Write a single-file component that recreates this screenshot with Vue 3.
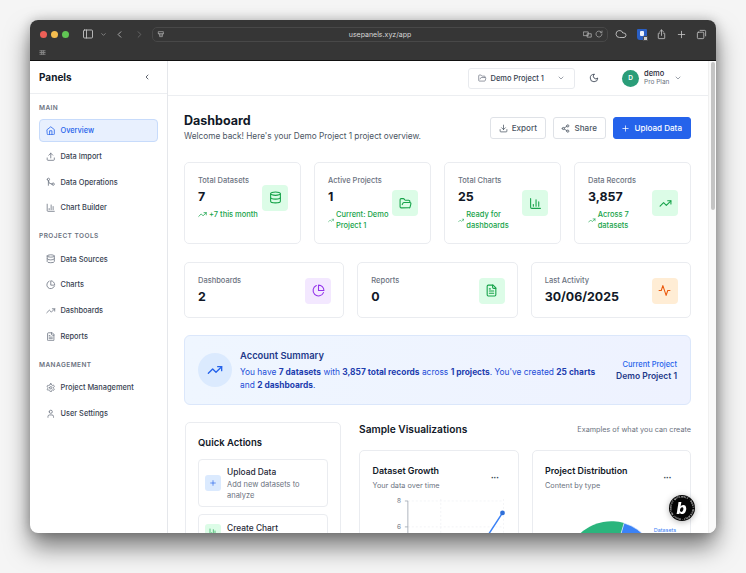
<script setup>
const c = (x, y, r) => `M${x - r} ${y}a${r} ${r} 0 1 0 ${2 * r} 0a${r} ${r} 0 1 0 ${-2 * r} 0`
const icons = {
  home: ['m3 9 9-7 9 7v11a2 2 0 0 1-2 2H5a2 2 0 0 1-2-2z', 'M9 22V12h6v10'],
  upload: ['M21 15v4a2 2 0 0 1-2 2H5a2 2 0 0 1-2-2v-4', 'M17 8l-5-5-5 5', 'M12 3v12'],
  download: ['M21 15v4a2 2 0 0 1-2 2H5a2 2 0 0 1-2-2v-4', 'M7 10l5 5 5-5', 'M12 15V3'],
  merge: [c(18, 18, 3), c(6, 6, 3), 'M6 21V9a9 9 0 0 0 9 9'],
  bars: ['M3 3v16a2 2 0 0 0 2 2h16', 'M18 17V9', 'M13 17V5', 'M8 17v-3'],
  database: ['M3 5a9 3 0 1 0 18 0a9 3 0 1 0-18 0', 'M3 5V19A9 3 0 0 0 21 19V5', 'M3 12A9 3 0 0 0 21 12'],
  pie: ['M21.21 15.89A10 10 0 1 1 8 2.83', 'M22 12A10 10 0 0 0 12 2v10z'],
  trend: ['m22 7-8.5 8.5-5-5L2 17', 'M16 7h6v6'],
  file: ['M15 2H6a2 2 0 0 0-2 2v16a2 2 0 0 0 2 2h12a2 2 0 0 0 2-2V7Z', 'M14 2v4a2 2 0 0 0 2 2h4', 'M10 9H8', 'M16 13H8', 'M16 17H8'],
  settings: ['M12.22 2h-.44a2 2 0 0 0-2 2v.18a2 2 0 0 1-1 1.73l-.43.25a2 2 0 0 1-2 0l-.15-.08a2 2 0 0 0-2.73.73l-.22.38a2 2 0 0 0 .73 2.73l.15.1a2 2 0 0 1 1 1.72v.51a2 2 0 0 1-1 1.74l-.15.09a2 2 0 0 0-.73 2.73l.22.38a2 2 0 0 0 2.73.73l.15-.08a2 2 0 0 1 2 0l.43.25a2 2 0 0 1 1 1.73V20a2 2 0 0 0 2 2h.44a2 2 0 0 0 2-2v-.18a2 2 0 0 1 1-1.73l.43-.25a2 2 0 0 1 2 0l.15.08a2 2 0 0 0 2.73-.73l.22-.39a2 2 0 0 0-.73-2.73l-.15-.08a2 2 0 0 1-1-1.74v-.5a2 2 0 0 1 1-1.74l.15-.09a2 2 0 0 0 .73-2.73l-.22-.38a2 2 0 0 0-2.73-.73l-.15.08a2 2 0 0 1-2 0l-.43-.25a2 2 0 0 1-1-1.73V4a2 2 0 0 0-2-2z', c(12, 12, 3)],
  user: ['M19 21v-2a4 4 0 0 0-4-4H9a4 4 0 0 0-4 4v2', c(12, 7, 4)],
  folder: ['m6 14 1.5-2.9A2 2 0 0 1 9.24 10H20a2 2 0 0 1 1.94 2.5l-1.54 6a2 2 0 0 1-1.95 1.5H4a2 2 0 0 1-2-2V5a2 2 0 0 1 2-2h3.9a2 2 0 0 1 1.69.9l.81 1.2a2 2 0 0 0 1.67.9H18a2 2 0 0 1 2 2v2'],
  moon: ['M12 3a6 6 0 0 0 9 9 9 9 0 1 1-9-9Z'],
  share: [c(18, 5, 3), c(6, 12, 3), c(18, 19, 3), 'M8.59 13.51l6.83 3.98', 'M15.41 6.51l-6.82 3.98'],
  plus: ['M5 12h14', 'M12 5v14'],
  activity: ['M22 12h-4l-3 9L9 3l-3 9H2'],
  left: ['m15 18-6-6 6-6'],
  right: ['m9 18 6-6-6-6'],
  down: ['m6 9 6 6 6-6'],
  panel: ['M5 4h14a2 2 0 0 1 2 2v12a2 2 0 0 1-2 2H5a2 2 0 0 1-2-2V6a2 2 0 0 1 2-2z', 'M9 4v16'],
  cloud: ['M17.5 19H9a7 7 0 1 1 6.71-9h1.79a4.5 4.5 0 1 1 0 9Z'],
  reload: ['M21 12a9 9 0 1 1-3-6.7', 'M21 3v5h-5'],
  tabs: ['M9 3h10a2 2 0 0 1 2 2v10', 'M5 7h10a2 2 0 0 1 2 2v10a2 2 0 0 1-2 2H5a2 2 0 0 1-2-2V9a2 2 0 0 1 2-2z'],
  sharebox: ['M8 9H6a1 1 0 0 0-1 1v10a1 1 0 0 0 1 1h12a1 1 0 0 0 1-1V10a1 1 0 0 0-1-1h-2', 'M12 14V2', 'M8 6l4-4 4 4'],
  db2: ['M5 5h14v6H5z', 'M5 11c0 3 3 4 7 4s7-1 7-4', 'M8 15v5h8v-5'],
  translate: ['M2 5h12v10H2z', 'M12 10h10v9H12z'],
  grid: ['M3 6h18', 'M3 12h18', 'M3 18h18', 'M9 6v12', 'M15 6v12']
}
const nav = [
  { title: 'Main', items: [['home', 'Overview', true], ['upload', 'Data Import'], ['merge', 'Data Operations'], ['bars', 'Chart Builder']] },
  { title: 'Project Tools', items: [['database', 'Data Sources'], ['pie', 'Charts'], ['trend', 'Dashboards'], ['file', 'Reports']] },
  { title: 'Management', items: [['settings', 'Project Management'], ['user', 'User Settings']] }
]
const topStats = [
  { label: 'Total Datasets', value: '7', trend: '+7 this month', icon: 'database' },
  { label: 'Active Projects', value: '1', trend: 'Current: Demo Project 1', icon: 'folder' },
  { label: 'Total Charts', value: '25', trend: 'Ready for dashboards', icon: 'bars' },
  { label: 'Data Records', value: '3,857', trend: 'Across 7 datasets', icon: 'trend' }
]
const lowStats = [
  { label: 'Dashboards', value: '2', icon: 'pie', tone: 'purple' },
  { label: 'Reports', value: '0', icon: 'file', tone: 'green' },
  { label: 'Last Activity', value: '30/06/2025', icon: 'activity', tone: 'orange' }
]
</script>

<template>
  <div class="page">
  <div class="window">
    <header class="chrome">
      <div class="toolbar">
        <span class="light red"></span><span class="light yellow"></span><span class="light green-l"></span>
        <svg class="ci side" viewBox="0 0 24 24"><path v-for="d in icons.panel" :key="d" :d="d" /></svg>
        <svg class="ci tiny" viewBox="0 0 24 24"><path v-for="d in icons.down" :key="d" :d="d" /></svg>
        <svg class="ci back" viewBox="0 0 24 24"><path v-for="d in icons.left" :key="d" :d="d" /></svg>
        <svg class="ci fwd" viewBox="0 0 24 24"><path v-for="d in icons.right" :key="d" :d="d" /></svg>
        <div class="url">
          <svg class="ci urlicon" viewBox="0 0 24 24"><path v-for="d in icons.db2" :key="d" :d="d" /></svg>
          <span class="urltext">usepanels.xyz/app</span>
          <svg class="ci trans" viewBox="0 0 24 24"><path v-for="d in icons.translate" :key="d" :d="d" /></svg>
          <svg class="ci rel" viewBox="0 0 24 24"><path v-for="d in icons.reload" :key="d" :d="d" /></svg>
        </div>
        <svg class="ci cloud" viewBox="0 0 24 24"><path v-for="d in icons.cloud" :key="d" :d="d" /></svg>
        <span class="shield"><span class="shield-mark"></span><span class="shield-dot"></span></span>
        <svg class="ci tool" viewBox="0 0 24 24"><path v-for="d in icons.sharebox" :key="d" :d="d" /></svg>
        <svg class="ci tool" viewBox="0 0 24 24"><path v-for="d in icons.plus" :key="d" :d="d" /></svg>
        <svg class="ci tool" viewBox="0 0 24 24"><path v-for="d in icons.tabs" :key="d" :d="d" /></svg>
      </div>
      <div class="favbar">
        <svg class="ci fav" viewBox="0 0 24 24"><path v-for="d in icons.grid" :key="d" :d="d" /></svg>
      </div>
    </header>

    <div class="app">
      <aside class="sidebar">
        <div class="brand">
          <span>Panels</span>
          <svg class="i brand-chev" viewBox="0 0 24 24"><path v-for="d in icons.left" :key="d" :d="d" /></svg>
        </div>
        <nav class="nav">
          <section v-for="g in nav" :key="g.title" class="group">
            <h4>{{ g.title }}</h4>
            <a v-for="it in g.items" :key="it[1]" class="item" :class="{ active: it[2] }">
              <svg class="i item-icon" viewBox="0 0 24 24"><path v-for="d in icons[it[0]]" :key="d" :d="d" /></svg>
              {{ it[1] }}
            </a>
          </section>
        </nav>
      </aside>

      <div class="main">
        <div class="topbar">
          <div class="select">
            <svg class="i sel-icon" viewBox="0 0 24 24"><path v-for="d in icons.folder" :key="d" :d="d" /></svg>
            <span>Demo Project 1</span>
            <svg class="i sel-chev" viewBox="0 0 24 24"><path v-for="d in icons.down" :key="d" :d="d" /></svg>
          </div>
          <svg class="i moon" viewBox="0 0 24 24"><path v-for="d in icons.moon" :key="d" :d="d" /></svg>
          <div class="avatar">D</div>
          <div class="who"><b>demo</b><span>Pro Plan</span></div>
          <svg class="i who-chev" viewBox="0 0 24 24"><path v-for="d in icons.down" :key="d" :d="d" /></svg>
        </div>

        <div class="content">
          <div class="head">
            <div>
              <h1>Dashboard</h1>
              <p>Welcome back! Here's your Demo Project 1 project overview.</p>
            </div>
            <div class="actions">
              <button class="btn">
                <svg class="i btn-i" viewBox="0 0 24 24"><path v-for="d in icons.download" :key="d" :d="d" /></svg>Export
              </button>
              <button class="btn">
                <svg class="i btn-i" viewBox="0 0 24 24"><path v-for="d in icons.share" :key="d" :d="d" /></svg>Share
              </button>
              <button class="btn primary">
                <svg class="i btn-i" viewBox="0 0 24 24"><path v-for="d in icons.plus" :key="d" :d="d" /></svg>Upload Data
              </button>
            </div>
          </div>

          <div class="stats four">
            <div v-for="s in topStats" :key="s.label" class="card stat">
              <div class="stat-row">
                <div class="stat-text">
                  <div class="label">{{ s.label }}</div>
                  <div class="value">{{ s.value }}</div>
                  <div class="trend">
                    <svg class="i trend-i" viewBox="0 0 24 24"><path v-for="d in icons.trend" :key="d" :d="d" /></svg>
                    <span>{{ s.trend }}</span>
                  </div>
                </div>
                <div class="tile green">
                  <svg class="i tile-i" viewBox="0 0 24 24"><path v-for="d in icons[s.icon]" :key="d" :d="d" /></svg>
                </div>
              </div>
            </div>
          </div>

          <div class="stats three">
            <div v-for="s in lowStats" :key="s.label" class="card stat low">
              <div class="stat-row">
                <div class="stat-text">
                  <div class="label">{{ s.label }}</div>
                  <div class="value">{{ s.value }}</div>
                </div>
                <div class="tile" :class="s.tone">
                  <svg class="i tile-i" viewBox="0 0 24 24"><path v-for="d in icons[s.icon]" :key="d" :d="d" /></svg>
                </div>
              </div>
            </div>
          </div>

          <div class="banner">
            <div class="circle">
              <svg class="i circle-i" viewBox="0 0 24 24"><path v-for="d in icons.trend" :key="d" :d="d" /></svg>
            </div>
            <div class="banner-text">
              <h3>Account Summary</h3>
              <p>You have <b>7 datasets</b> with <b>3,857 total records</b> across <b>1 projects</b>. You've created <b>25 charts</b> and <b>2 dashboards</b>.</p>
            </div>
            <div class="banner-side">
              <span>Current Project</span>
              <b>Demo Project 1</b>
            </div>
          </div>

          <div class="lower">
            <div class="card quick">
              <h3>Quick Actions</h3>
              <div class="action">
                <div class="small-tile blue">
                  <svg class="i small-i" viewBox="0 0 24 24"><path v-for="d in icons.plus" :key="d" :d="d" /></svg>
                </div>
                <div class="action-text">
                  <div class="action-title">Upload Data</div>
                  <div class="action-sub">Add new datasets to analyze</div>
                </div>
              </div>
              <div class="action cut">
                <div class="small-tile green">
                  <svg class="i small-i" viewBox="0 0 24 24"><path v-for="d in icons.bars" :key="d" :d="d" /></svg>
                </div>
                <div class="action-text">
                  <div class="action-title">Create Chart</div>
                </div>
              </div>
            </div>

            <div class="viz">
              <div class="viz-head">
                <h2>Sample Visualizations</h2>
                <span>Examples of what you can create</span>
              </div>
              <div class="viz-grid">
                <div class="card chart">
                  <div class="chart-head">
                    <div>
                      <h3>Dataset Growth</h3>
                      <p>Your data over time</p>
                    </div>
                    <span class="dots">···</span>
                  </div>
                  <svg class="plot" viewBox="0 0 133 100">
                    <g class="gridlines">
                      <path d="M35 5H131M35 31H131M35 57H131M68 3V100M131 3V100" />
                    </g>
                    <path class="axis" d="M32 5H35V100M32 31H35" />
                    <text x="28" y="7">8</text>
                    <text x="28" y="33">6</text>
                    <path class="line" d="M68 90L115 40L130 17" />
                    <circle class="dot" cx="130" cy="17" r="2.4" />
                  </svg>
                </div>
                <div class="card chart">
                  <div class="chart-head">
                    <div>
                      <h3>Project Distribution</h3>
                      <p>Content by type</p>
                    </div>
                    <span class="dots">···</span>
                  </div>
                  <svg class="plot" viewBox="0 0 134 100">
                    <path class="pie-green" d="M67 71.5L80 27.4A46 46 0 0 0 21 71.5Z" />
                    <path class="pie-blue" d="M67 71.5L80 27.4A46 46 0 0 1 113 71.5Z" />
                    <text class="pie-label" x="110" y="36">Datasets</text>
                  </svg>
                </div>
              </div>
            </div>
          </div>
        </div>
      </div>

      <div class="scroll"><span class="thumb"></span></div>

      <svg class="badge" viewBox="0 0 52 52">
        <defs><path id="ring" d="M26 26m-21 0a21 21 0 1 1 42 0a21 21 0 1 1-42 0" /></defs>
        <circle cx="26" cy="26" r="26" fill="#050505" />
        <text class="ring"><textPath href="#ring">BUILT WITH BOLT · BUILT WITH BOLT · BUILT WITH</textPath></text>
        <text class="b" x="25" y="38" text-anchor="middle">b</text>
      </svg>
    </div>
  </div>
  </div>
</template>

<style>
html, body { margin: 0; background: #f5f5f5; }
</style>

<style scoped>
* { box-sizing: border-box; }
h1, h2, h3, h4, p { margin: 0; }
.page { width: 746px; height: 573px; padding: 20px 0 0 30px; background: #f5f5f5; overflow: hidden; }
.window {
  position: relative;
  width: 686px;
  height: 513px;
  border-radius: 8px;
  overflow: hidden;
  font-family: Inter, "Liberation Sans", sans-serif;
  color: #111827;
  background: #fff;
  box-shadow: 0 14px 24px rgba(0, 0, 0, .5), 0 0 12px rgba(0, 0, 0, .22);
}
.i { fill: none; stroke: currentColor; stroke-width: 2; stroke-linecap: round; stroke-linejoin: round; }
.ci { fill: none; stroke: #c4c4c4; stroke-width: 1.8; stroke-linecap: round; stroke-linejoin: round; flex: none; }

.chrome { height: 41px; background: #363636; border-bottom: 1px solid #111; }
.toolbar { height: 26px; display: flex; align-items: center; padding: 2px 0 0 10px; }
.light { width: 7px; height: 7px; border-radius: 50%; margin-right: 4px; flex: none; }
.red { background: #ed5f57; }
.yellow { background: #f4bd4f; }
.green-l { background: #61c554; }
.side { width: 12px; height: 12px; margin-left: 9px; }
.tiny { width: 7px; height: 7px; margin-left: 6px; }
.back { width: 11px; height: 11px; margin-left: 7px; }
.fwd { width: 11px; height: 11px; margin-left: 9px; stroke: #6e6e6e; }
.url {
  width: 456px;
  height: 15px;
  margin-left: 7px;
  border: 1px solid #484848;
  border-radius: 5px;
  display: flex;
  align-items: center;
  padding: 0 4px;
  flex: none;
}
.urlicon { width: 8px; height: 8px; }
.urltext { flex: 1; text-align: center; font-size: 7px; color: #d8d8d8; padding-left: 12px; }
.trans { width: 9px; height: 9px; }
.rel { width: 8px; height: 8px; margin-left: 3px; }
.cloud { width: 12px; height: 12px; margin-left: 7px; }
.shield { width: 10px; height: 11px; margin-left: 10px; border-radius: 1px 1px 3px 3px; background: #2a5fc4; position: relative; flex: none; }
.shield-mark { position: absolute; left: 3px; top: 2px; width: 4px; height: 5px; border-radius: 1px; background: #eef2fb; }
.shield-dot { position: absolute; right: -1px; bottom: -1px; width: 5px; height: 5px; border-radius: 1px; background: #cfcfcf; border: 1px solid #4a4a4a; }
.tool { width: 11px; height: 11px; margin-left: 9px; }
.favbar { height: 13px; padding: 0 0 0 9px; display: flex; align-items: center; }
.fav { width: 7px; height: 7px; stroke: #8a8a8a; stroke-width: 3; }

.app { position: relative; display: flex; height: 472px; overflow: hidden; }
.sidebar { width: 138px; flex: none; border-right: 1px solid #e5e7eb; }
.brand {
  height: 33px;
  padding: 0 16px 0 9px;
  display: flex;
  align-items: center;
  justify-content: space-between;
  font-size: 10px;
  font-weight: 700;
  border-bottom: 1px solid #eceef1;
}
.brand-chev { width: 8px; height: 8px; }
.nav { padding: 8.5px 9px 0; }
.group { margin-bottom: 11.7px; }
.group h4 {
  font-size: 6.5px;
  line-height: 10px;
  font-weight: 600;
  letter-spacing: .45px;
  text-transform: uppercase;
  color: #6b7280;
  margin-bottom: 6.5px;
}
.item {
  height: 23px;
  margin: 0 0 2.8px;
  padding: 0 6px;
  display: flex;
  align-items: center;
  gap: 5px;
  font-size: 7.4px;
  font-weight: 500;
  color: #374151;
  border: 1px solid transparent;
  border-radius: 4px;
}
.item-icon { width: 9.5px; height: 9.5px; color: #6b7280; flex: none; }
.item.active { background: #e8f0fe; border-color: #c7dbfb; color: #2563eb; }
.item.active .item-icon { color: #2563eb; }

.main { flex: 1; min-width: 0; }
.topbar {
  height: 35px;
  display: flex;
  align-items: center;
  padding-right: 34px;
  justify-content: flex-end;
  border-bottom: 1px solid #eceef1;
}
.select {
  width: 107px;
  height: 21px;
  border: 1px solid #e8eaee;
  border-radius: 3px;
  display: flex;
  align-items: center;
  padding: 0 9px;
  font-size: 7.5px;
  font-weight: 500;
  color: #374151;
}
.sel-icon { width: 8.5px; height: 8.5px; color: #6b7280; margin-right: 4px; }
.sel-chev { width: 8px; height: 8px; margin-left: auto; color: #6b7280; }
.moon { width: 10px; height: 10px; margin: 0 23px 0 14px; color: #374151; }
.avatar {
  width: 17px;
  height: 17px;
  border-radius: 50%;
  background: #2a9d78;
  color: #fff;
  font-size: 6.5px;
  font-weight: 600;
  display: flex;
  align-items: center;
  justify-content: center;
}
.who { margin-left: 5px; display: flex; flex-direction: column; width: 29px; }
.who b { font-size: 7.5px; line-height: 9px; font-weight: 500; color: #1f2937; }
.who span { font-size: 6.5px; line-height: 9px; color: #6b7280; }
.who-chev { width: 8px; height: 8px; color: #6b7280; margin-left: 1px; }

.content { padding: 16px 25px 0 16px; }
.head { display: flex; justify-content: space-between; align-items: flex-start; margin-bottom: 19px; }
h1 { font-size: 12.5px; line-height: 17px; font-weight: 700; }
.head p { font-size: 8.25px; line-height: 13px; color: #4b5563; margin-top: 1px; }
.actions { display: flex; gap: 7px; margin-top: 5px; }
.btn {
  height: 22px;
  padding: 0 8px 0 7.5px;
  display: flex;
  align-items: center;
  gap: 4px;
  font: 500 8.1px Inter, "Liberation Sans", sans-serif;
  color: #4b5563;
  background: #fff;
  border: 1px solid #dfe2e7;
  border-radius: 3px;
}
.btn-i { width: 9px; height: 9px; }
.primary { background: #2563eb; border-color: #2563eb; color: #fff; }

.stats { display: grid; }
.four { grid-template-columns: repeat(4, 1fr); gap: 13px; margin-bottom: 18px; }
.three { grid-template-columns: repeat(3, 1fr); gap: 13px; margin-bottom: 17px; }
.card { background: #fff; border: 1px solid #eaecf0; border-radius: 5px; }
.stat { padding: 12px 12px 10px 13px; height: 82px; }
.stat.low { height: 56px; padding-left: 13px; }
.stat-row { display: flex; align-items: center; gap: 0; }
.stat-text { flex: 1; min-width: 0; }
.label { font-size: 7.5px; line-height: 11px; color: #6b7280; font-weight: 500; }
.value { font-size: 12.4px; line-height: 19px; font-weight: 700; color: #111827; margin-top: 1px; }
.trend { display: flex; align-items: center; gap: 2px; margin-top: 3px; font-size: 7.5px; line-height: 11px; color: #16a34a; font-weight: 500; }
.trend-i { width: 9px; height: 9px; min-width: 0; }
.tile { width: 26px; height: 26px; border-radius: 4px; flex: none; display: flex; align-items: center; justify-content: center; }
.tile-i { width: 13px; height: 13px; }
.green { background: #dcfce7; color: #16a34a; }
.purple { background: #f3e8ff; color: #9333ea; }
.orange { background: #ffedd5; color: #ea580c; }
.blue { background: #dbeafe; color: #2563eb; }

.banner {
  height: 70px;
  margin-bottom: 17px;
  padding: 0 13px;
  display: flex;
  align-items: center;
  border: 1px solid #dbe7fb;
  border-radius: 6px;
  background: linear-gradient(90deg, #eff6ff, #eef2ff);
}
.circle { width: 34px; height: 34px; border-radius: 50%; background: #dbeafe; color: #2563eb; flex: none; display: flex; align-items: center; justify-content: center; }
.circle-i { width: 16px; height: 16px; }
.banner-text { margin-left: 8px; flex: 1; min-width: 0; padding-top: 1px; }
.banner-text h3 { font-size: 9.4px; line-height: 13px; font-weight: 600; color: #1e3a8a; margin-bottom: 4.5px; }
.banner-text p { font-size: 8.4px; line-height: 13px; color: #1d4ed8; width: 360px; }
.banner-text b { font-weight: 700; color: #1e40af; }
.banner-side { display: flex; flex-direction: column; align-items: flex-end; flex: none; padding-top: 1px; }
.banner-side span { font-size: 7.5px; line-height: 11px; color: #2563eb; font-weight: 500; }
.banner-side b { font-size: 8.5px; line-height: 13px; font-weight: 600; color: #1e3a8a; }

.lower { display: grid; grid-template-columns: 157px 1fr; gap: 18px; }
.quick { padding: 13px 12px; margin-left: 1px; height: 160px; }
.quick h3 { font-size: 9.5px; line-height: 14px; font-weight: 600; margin-bottom: 9px; }
.action { display: flex; align-items: center; gap: 6px; padding: 6px; border: 1px solid #eaecf0; border-radius: 4px; margin-bottom: 7px; height: 48px; }
.action.cut { align-items: flex-start; }
.action.cut .small-tile { margin-top: 3px; }
.action-text { padding-top: 1px; }
.small-tile { width: 16px; height: 16px; border-radius: 3px; flex: none; display: flex; align-items: center; justify-content: center; }
.small-i { width: 8px; height: 8px; }
.action-title { font-size: 8.4px; line-height: 12px; font-weight: 500; color: #1f2937; margin-bottom: 1px; }
.action-sub { font-size: 7.5px; line-height: 11px; color: #6b7280; }

.viz-head { display: flex; align-items: center; justify-content: space-between; height: 14px; margin-bottom: 14px; }
.viz-head h2 { font-size: 10.2px; font-weight: 600; color: #111827; }
.viz-head span { font-size: 7.25px; color: #6b7280; }
.viz-grid { display: grid; grid-template-columns: 1fr 1fr; gap: 13px; }
.chart { padding: 13px 12.5px 0; height: 200px; }
.chart-head { display: flex; justify-content: space-between; align-items: center; }
.chart h3 { font-size: 8.9px; line-height: 14px; font-weight: 600; }
.chart p { font-size: 7.3px; line-height: 11px; color: #6b7280; margin-top: 2px; }
.dots { font: 700 9px "Liberation Sans", sans-serif; color: #374151; margin-right: 6px; letter-spacing: -.3px; }
.plot { display: block; width: 100%; margin-top: 5px; overflow: visible; }
.plot text { font-size: 6.5px; fill: #6b7280; text-anchor: end; font-family: Inter, sans-serif; }
.gridlines path { fill: none; stroke: #eceef1; stroke-width: .6; stroke-dasharray: 2 2; }
.axis { fill: none; stroke: #9ca3af; stroke-width: .8; }
.line { fill: none; stroke: #3b82f6; stroke-width: 1.5; }
.dot { fill: #2f6fd8; }
.pie-green { fill: #2bb57d; }
.pie-blue { fill: #3b82f6; stroke: #fff; stroke-width: .6; }
.plot .pie-label { font-size: 5.5px; fill: #3b82f6; text-anchor: start; }

.scroll { position: absolute; top: 0; right: 0; bottom: 0; width: 8px; background: #fafafa; border-left: 1px solid #f0f0f0; }
.thumb { position: absolute; top: 1px; left: 2px; width: 4px; height: 148px; border-radius: 2px; background: #c4c4c4; }
.badge { position: absolute; left: 639px; top: 434px; width: 26px; height: 26px; filter: drop-shadow(0 1px 3px rgba(0, 0, 0, .3)); }
.ring { font: 700 4.6px "Liberation Sans", sans-serif; fill: #e5e5e5; letter-spacing: .35px; }
.b { font: italic 800 32px Inter, sans-serif; fill: #fff; }
</style>
